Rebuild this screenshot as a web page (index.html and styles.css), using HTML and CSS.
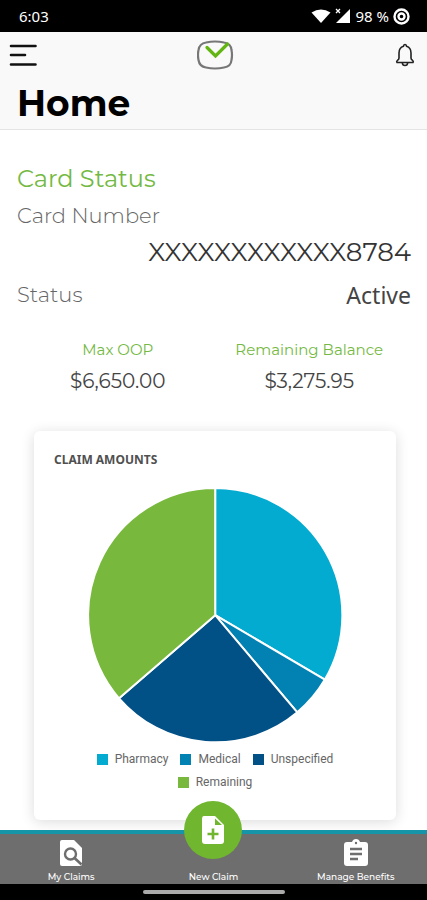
FILE: index.html
```html
<!DOCTYPE html>
<html lang="en">
  <head>
    <meta charset="UTF-8" />
    <meta name="viewport" content="width=device-width, initial-scale=1.0" />
    <title>Home</title>
    <link rel="stylesheet" href="styles.css">
  </head>
  <body>
    <!-- Status bar -->
    <div class="status-bar">
      <span>6:03</span>
      <div class="status-icons">
        <svg width="20" height="16" viewBox="0 0 20 16">
          <path d="M0.500 4.500Q10 -1.500 19.500 4.500L10 15Z" fill="#fff" />
        </svg>
        <svg width="16" height="16" viewBox="0 0 16 16">
          <path d="M15 1V15H1Z" fill="#fff" />
          <path d="M1 1L5 5M5 1L1 5" stroke="#fff" stroke-width="1.300" />
        </svg>
        <span>98 %</span>
        <svg width="17" height="17" viewBox="0 0 17 17" fill="none" stroke="#fff">
          <circle cx="8.500" cy="8.500" r="7" stroke-width="2.400" />
          <circle cx="8.500" cy="8.500" r="3" stroke-width="2.400" />
        </svg>
      </div>
    </div>

    <!-- Header -->
    <header class="header">
      <div class="toolbar">
        <button class="icon-btn" aria-label="Menu">
          <svg width="28" height="24" viewBox="0 0 28 24" stroke="#111" stroke-width="2.600" stroke-linecap="round">
            <path d="M2 3H26.500M2 12H16M2 21.500H26.500" />
          </svg>
        </button>
        <svg class="logo" width="38" height="30" viewBox="0 0 38 30" fill="none">
          <path d="M9 2.500Q18 0.500 27 2.500Q34 3.500 34.500 10Q35.500 15 34.500 20Q34 26.500 27 27.500Q18 29.500 9 27.500Q2.500 26.500 1.500 20Q0.500 15 1.500 10Q2.500 3.500 9 2.500Z" stroke="#777" stroke-width="2.200" />
          <path d="M10 7.500L18.500 16L30.500 4" stroke="#62b512" stroke-width="3.200" stroke-linecap="round" />
        </svg>
        <button class="icon-btn" aria-label="Notifications">
          <svg width="20" height="24" viewBox="0 0 20 24" fill="none" stroke="#222" stroke-width="1.600" stroke-linejoin="round">
            <path d="M8.500 3.200Q8.500 1.500 10 1.500Q11.500 1.500 11.500 3.200Q16 4.500 16 10V15Q16 16.500 17.500 17.300Q18.800 18.200 18 19.500H2Q1.200 18.200 2.500 17.300Q4 16.500 4 15V10Q4 4.500 8.500 3.200Z" />
            <path d="M7.300 19.700Q7.500 22.500 10 22.500Q12.500 22.500 12.700 19.700" />
          </svg>
        </button>
      </div>
      <h1>Home</h1>
    </header>

    <main class="content">
      <!-- Card status -->
      <section class="card-status">
        <h2>Card Status</h2>
        <div class="label">Card Number</div>
        <div class="card-number">XXXXXXXXXXXX8784</div>
        <div class="status-row">
          <span class="label">Status</span>
          <span class="status-value">Active</span>
        </div>
      </section>

      <!-- Balances -->
      <section class="balances">
        <div class="balance">
          <div class="balance-label">Max OOP</div>
          <div class="balance-value">$6,650.00</div>
        </div>
        <div class="balance">
          <div class="balance-label">Remaining Balance</div>
          <div class="balance-value">$3,275.95</div>
        </div>
      </section>

      <!-- Claim amounts chart -->
      <section class="chart-card">
        <h3>CLAIM AMOUNTS</h3>
        <svg class="pie" viewBox="0 0 254 254" stroke="#fff" stroke-width="2" stroke-linejoin="round">
          <path d="M127 127V0A127 127 0 0 1 236.500 191.300Z" fill="#02abcf" />
          <path d="M127 127L236.500 191.300A127 127 0 0 1 209 224Z" fill="#0281b3" />
          <path d="M127 127L209 224A127 127 0 0 1 31 210Z" fill="#015086" />
          <path d="M127 127L31 210A127 127 0 0 1 127 0Z" fill="#78b83c" />
        </svg>
        <ul class="legend">
          <li><span class="swatch pharmacy"></span>Pharmacy</li>
          <li><span class="swatch medical"></span>Medical</li>
          <li><span class="swatch unspecified"></span>Unspecified</li>
          <li><span class="swatch remaining"></span>Remaining</li>
        </ul>
      </section>
    </main>

    <!-- Bottom navigation -->
    <nav class="bottom-nav">
      <a href="#">
        <svg width="24" height="28" viewBox="0 0 24 28">
          <path d="M3 1H15L23 9V25Q23 27 21 27H3Q1 27 1 25V3Q1 1 3 1Z" fill="#fff" />
          <circle cx="11.500" cy="15" r="5.500" fill="none" stroke="#6e6e6e" stroke-width="2.400" />
          <path d="M15.500 19L22.500 25.500" stroke="#6e6e6e" stroke-width="2.600" />
        </svg>
        My Claims
      </a>
      <a href="#">
        <span class="fab">
          <svg width="24" height="30" viewBox="0 0 24 30">
            <path d="M3 1H14L23 10V26Q23 29 20 29H4Q1 29 1 26V4Q1 1 3 1Z" fill="#fff" />
            <path d="M14 3.500V10H21Z" fill="#70b62f" />
            <path d="M12 13.500V24.500M6.500 19H17.500" stroke="#70b62f" stroke-width="2.600" />
          </svg>
        </span>
        New Claim
      </a>
      <a href="#">
        <svg width="26" height="28" viewBox="0 0 26 28">
          <path d="M4 3H9Q10 0 13 0Q16 0 17 3H22Q25 3 25 6V24Q25 27 22 27H4Q1 27 1 24V6Q1 3 4 3Z" fill="#fff" />
          <circle cx="13" cy="4" r="1.200" fill="#6e6e6e" />
          <path d="M7 10H19M7 15H19M7 20H15" stroke="#6e6e6e" stroke-width="2.400" />
        </svg>
        Manage Benefits
      </a>
    </nav>
    <div class="gesture-bar"><span></span></div>
  </body>
</html>
```
FILE: styles.css
```css
* {
  box-sizing: border-box;
}

body {
  display: flex;
  flex-direction: column;
  min-height: 100vh;
  margin: 0;
  background-color: #fff;
  font-family: Montserrat, Inter, sans-serif;
}

h1,
h2,
h3 {
  margin: 0;
}

/* Status bar */
.status-bar {
  display: flex;
  justify-content: space-between;
  align-items: center;
  height: 32px;
  padding: 0 17px 0 19px;
  background-color: #000;
  color: #fff;
  font: 15px "Noto Sans", sans-serif;
}

.status-icons {
  display: flex;
  align-items: center;
  gap: 4px;
}

/* Header */
.header {
  height: 98px;
  background-color: #f9f9f9;
  border-bottom: 1px solid #e4e4e4;
}

.toolbar {
  display: flex;
  justify-content: space-between;
  align-items: center;
  height: 46px;
  padding: 0 12px 0 9px;
}

.icon-btn {
  display: flex;
  padding: 0;
  border: none;
  background: none;
  cursor: pointer;
}

.header h1 {
  padding-left: 17px;
  font-size: 36px;
  line-height: 50px;
}

/* Card status */
.content {
  flex: 1;
  padding-top: 32px;
}

.card-status {
  padding: 0 16px 0 17px;
}

.card-status h2 {
  color: #74b943;
  font-size: 24px;
  font-weight: 400;
  line-height: 34px;
}

.label {
  color: #666;
  font-size: 21px;
  font-weight: 300;
  line-height: 40px;
}

.card-number {
  color: #333;
  font-size: 26px;
  font-weight: 400;
  line-height: 32px;
  text-align: right;
}

.status-row {
  display: flex;
  justify-content: space-between;
  align-items: center;
  height: 54px;
}

.status-value {
  color: #444;
  font: 23px "Noto Sans", sans-serif;
}

/* Balances */
.balances {
  display: grid;
  grid-template-columns: 1fr 1fr;
  padding: 14px 22px 0;
  text-align: center;
}

.balance-label {
  color: #74b943;
  font-size: 15px;
  font-weight: 400;
  line-height: 28px;
}

.balance-value {
  color: #444;
  font-size: 20px;
  font-weight: 400;
  line-height: 34px;
}

/* Claim amounts chart */
.chart-card {
  margin: 33px 31px 10px 34px;
  padding: 20px 20px 26px;
  border-radius: 6px;
  background-color: #fff;
  box-shadow: 0 2px 14px rgba(0, 0, 0, 0.14);
}

.chart-card h3 {
  color: #505050;
  font: bold 12px/18px "Noto Sans", sans-serif;
}

.pie {
  display: block;
  width: 79%;
  margin: 19px auto 0;
}

.legend {
  display: flex;
  flex-wrap: wrap;
  justify-content: center;
  column-gap: 12px;
  margin: 6px 0 0;
  padding: 0;
  list-style: none;
  color: #666;
  font-family: Roboto, sans-serif;
  font-size: 12px;
  line-height: 23px;
}

.legend li {
  display: flex;
  align-items: center;
  gap: 7px;
}

.swatch {
  width: 11px;
  height: 11px;
}

.pharmacy {
  background-color: #02abcf;
}

.medical {
  background-color: #0281b3;
}

.unspecified {
  background-color: #015086;
}

.remaining {
  background-color: #78b83c;
}

/* Bottom navigation */
.bottom-nav {
  display: grid;
  grid-template-columns: repeat(3, 1fr);
  height: 54px;
  border-top: 4px solid #1695a8;
  background-color: #6e6e6e;
}

.bottom-nav a {
  position: relative;
  display: flex;
  flex-direction: column;
  align-items: center;
  justify-content: flex-end;
  gap: 3px;
  color: #fff;
  font-size: 9px;
  font-weight: 500;
  line-height: 14px;
  text-decoration: none;
}

.fab {
  position: absolute;
  top: -33px;
  display: flex;
  align-items: center;
  justify-content: center;
  width: 58px;
  height: 58px;
  border-radius: 50%;
  background-color: #70b62f;
}

.gesture-bar {
  display: flex;
  align-items: center;
  justify-content: center;
  height: 16px;
  background-color: #000;
}

.gesture-bar span {
  width: 142px;
  height: 4px;
  border-radius: 2px;
  background-color: #aaa;
}
```
